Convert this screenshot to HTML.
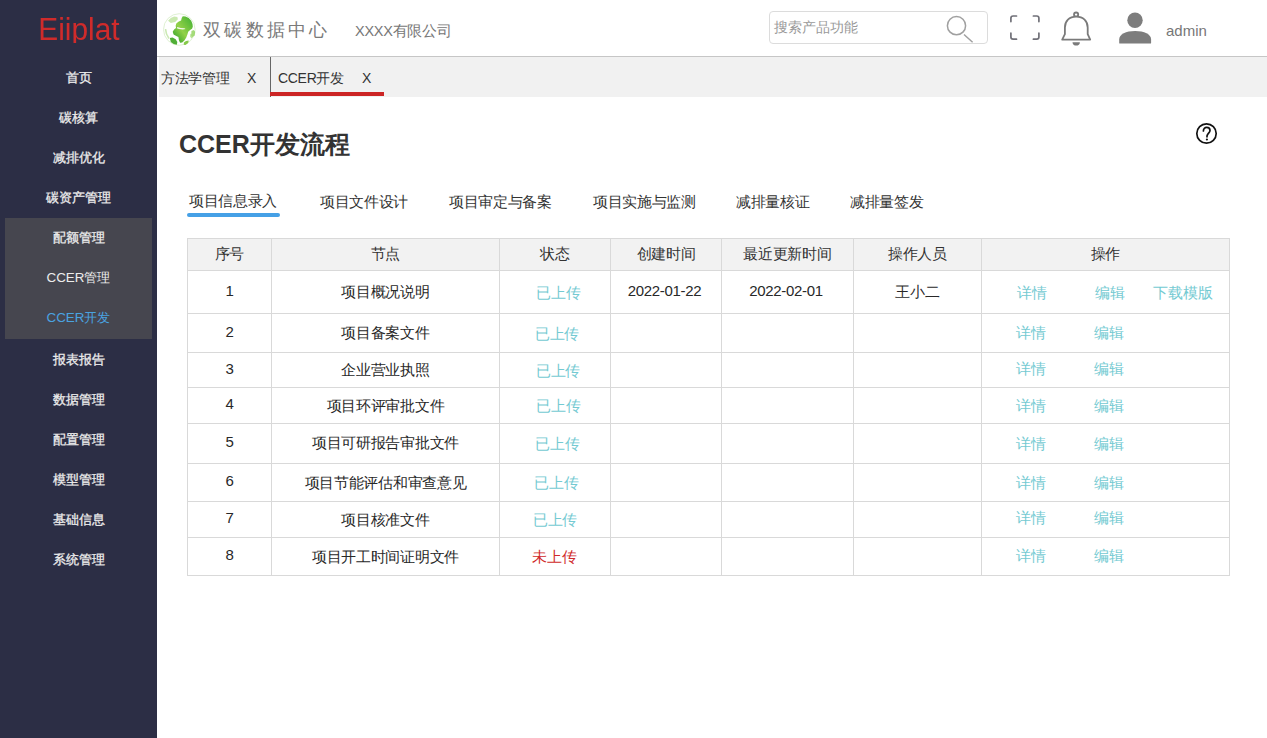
<!DOCTYPE html>
<html><head><meta charset="utf-8">
<style>
*{margin:0;padding:0;box-sizing:border-box;}
html,body{width:1267px;height:738px;overflow:hidden;background:#fff;font-family:"Liberation Sans",sans-serif;color:#333;}
.a{position:absolute;white-space:nowrap;}
#side{position:absolute;left:0;top:0;width:157px;height:738px;background:#2c2e45;}
#logo{position:absolute;left:0;width:157px;top:10px;height:32.5px;overflow:hidden;text-align:center;font-size:30.8px;color:#d02b2b;line-height:40px;}
#logo span{display:inline-block;transform:scaleX(0.97);transform-origin:50% 50%;}
.mi{position:absolute;left:0;width:157px;text-align:center;font-size:13.4px;color:#ececec;line-height:20px;font-weight:normal;-webkit-text-stroke:0.3px #ececec;}
#sub{position:absolute;left:5px;top:218px;width:147px;height:121px;background:#46464f;}
#hdr{position:absolute;left:157px;top:0;width:1110px;height:57px;background:#fff;border-bottom:1px solid #c6c6c6;}
#tabbar{position:absolute;left:159px;top:57px;width:1108px;height:40px;background:#f1f1f1;}
.tb{position:absolute;font-size:14px;color:#333;line-height:20px;letter-spacing:-0.3px;}
.tab{position:absolute;left:0;font-size:15px;letter-spacing:-0.35px;color:#333;line-height:20px;}
table{position:absolute;left:187px;top:238px;border-collapse:collapse;font-size:15px;color:#282828;}
td,th{border:1px solid #d9d9d9;text-align:center;font-weight:normal;padding:0;letter-spacing:-0.3px;}
th{background:#f2f2f2;color:#333;font-size:15px;}
.up{color:#74cad2;font-size:14.6px;padding-top:2px;}
.dg{position:relative;top:-2px;}
.no{color:#d02a2a;font-size:14.6px;padding-top:2px;}
.lk{color:#74cad2;}
</style></head><body>
<div id="side">
  <div id="logo"><span>Eiiplat</span></div>
  <div class="mi" style="top:68px">首页</div>
  <div class="mi" style="top:108px">碳核算</div>
  <div class="mi" style="top:148px">减排优化</div>
  <div class="mi" style="top:188px">碳资产管理</div>
  <div id="sub"></div>
  <div class="mi" style="top:228px">配额管理</div>
  <div class="mi" style="top:268px;-webkit-text-stroke:0">CCER管理</div>
  <div class="mi" style="top:308px;color:#4aa3e0;-webkit-text-stroke:0">CCER开发</div>
  <div class="mi" style="top:350px">报表报告</div>
  <div class="mi" style="top:390px">数据管理</div>
  <div class="mi" style="top:430px">配置管理</div>
  <div class="mi" style="top:470px">模型管理</div>
  <div class="mi" style="top:510px">基础信息</div>
  <div class="mi" style="top:550px">系统管理</div>
</div>

<div id="hdr"></div>
<!-- globe -->
<svg class="a" style="left:160px;top:10px" width="40" height="40" viewBox="0 0 40 40">
  <defs>
    <linearGradient id="g1" x1="0.1" y1="0.9" x2="0.9" y2="0.1"><stop offset="0" stop-color="#3aa52c"/><stop offset="0.45" stop-color="#93d148"/><stop offset="1" stop-color="#4cb535"/></linearGradient>
    <filter id="bl" x="-10%" y="-10%" width="120%" height="120%"><feGaussianBlur stdDeviation="0.45"/></filter>
  </defs>
  <circle cx="19.3" cy="19.5" r="15.8" fill="none" stroke="#dff1d2" stroke-width="1"/>
  <g filter="url(#bl)">
  <polygon points="22.8,6.2 25.5,6.5 28.7,8.1 31.2,10.8 32.5,14.1 32.8,16.8 32.0,18.7 30.1,20.1 28.2,21.7 27.4,24.4 26.3,27.6 24.4,30.4 22.2,32.5 20.1,32.8 19.0,30.4 18.4,27.1 16.3,26.0 13.6,24.4 12.7,21.7 14.1,19.5 16.0,17.9 15.7,15.7 16.3,13.6 18.4,11.7 21.1,10.6 21.7,8.1" fill="url(#g1)"/>
  <polygon points="17.3,17.1 20.6,17.9 24.4,18.2 25.5,19.0 22.8,19.5 19.0,19.0 16.8,18.2" fill="#f4faee"/>
  <polygon points="9.8,27.9 12.5,27.6 15.7,29.3 17.3,32.0 16.8,34.7 13.6,34.1 10.8,32.0" fill="#4fae35"/>
  <polygon points="23.8,32.5 26.0,30.9 28.7,30.6 28.2,33.1 25.5,35.0 23.8,34.7" fill="#86c94a"/>
  <polygon points="31.4,21.1 33.6,20.1 35.2,21.7 34.7,25.5 32.5,27.1 31.2,25.5" fill="#8fd35a" opacity="0.8"/>
  <polygon points="30.4,23.8 32.5,24.4 33.1,27.1 31.2,28.2 30.1,26.6" fill="#a5dc78" opacity="0.8"/>
  <polygon points="8.1,10.8 10.8,8.1 14.1,6.5 17.3,7.0 17.9,9.2 15.2,11.9 10.8,13.0" fill="#b4e08e" opacity="0.7"/>
  <path d="M5.5 19 C5.8 23,7 26,9 28.5" stroke="#b5e094" stroke-width="1.6" fill="none" opacity="0.7"/>
  </g>
</svg>
<div class="a" style="left:203px;top:17px;font-size:18px;line-height:26px;color:#7a7a7a;letter-spacing:3.3px;font-weight:normal;">双碳数据中心</div>
<div class="a" style="left:355px;top:21px;font-size:14.5px;line-height:20px;color:#777;letter-spacing:-0.25px;">XXXX有限公司</div>

<!-- search -->
<div class="a" style="left:769px;top:11px;width:219px;height:33px;border:1px solid #dcdcdc;border-radius:4px;"></div>
<div class="a" style="left:774px;top:18px;font-size:13.6px;line-height:20px;color:#9a9a9a;">搜索产品功能</div>
<svg class="a" style="left:940px;top:10px" width="40" height="40" viewBox="0 0 40 40">
  <circle cx="16.5" cy="15.7" r="9.1" fill="none" stroke="#a0a0a0" stroke-width="1.5"/>
  <line x1="24" y1="24.5" x2="32.6" y2="32.2" stroke="#a0a0a0" stroke-width="1.5"/>
</svg>
<!-- fullscreen -->
<svg class="a" style="left:1005px;top:11px" width="40" height="34" viewBox="0 0 40 34">
  <path d="M5.9 10.6 V7.2 Q5.9 5,8.1 5 H11.5 M28.4 5 H31.7 Q33.9 5,33.9 7.2 V10.6 M33.9 22.2 V26 Q33.9 28.2,31.7 28.2 H28.4 M11.5 28.2 H8.1 Q5.9 28.2,5.9 26 V22.2" fill="none" stroke="#707078" stroke-width="1.7" stroke-linecap="round"/>
</svg>
<!-- bell -->
<svg class="a" style="left:1058px;top:10px" width="36" height="38" viewBox="0 0 36 38">
  <circle cx="18.1" cy="4.6" r="2.1" fill="none" stroke="#7a7a7a" stroke-width="1.8"/>
  <path d="M18.2 6.6 C11.2 6.6,6.9 11,6.9 17.5 V24.2 L4.2 29.6 H32.2 L29.7 24.2 V17.5 C29.7 11,25.2 6.6,18.2 6.6 Z" fill="#fff" stroke="#7a7a7a" stroke-width="1.8" stroke-linejoin="round"/>
  <path d="M14.5 32.2 H21.9 C21.9 34.3,20.3 35.6,18.2 35.6 C16.1 35.6,14.5 34.3,14.5 32.2 Z" fill="#7a7a7a"/>
</svg>
<!-- user -->
<svg class="a" style="left:1115px;top:10px" width="40" height="36" viewBox="0 0 40 36">
  <circle cx="20" cy="10.3" r="7.7" fill="#7d7d7d"/>
  <path d="M4.2 33 V29.5 C4.2 24.5,11 21.1,20.1 21.1 C29.2 21.1,36.1 24.5,36.1 29.5 V33 Q36.1 33.6,35.4 33.6 H4.9 Q4.2 33.6,4.2 33 Z" fill="#7d7d7d"/>
</svg>
<div class="a" style="left:1166px;top:21px;font-size:15px;line-height:20px;color:#777;">admin</div>

<!-- tab bar -->
<div id="tabbar"></div>
<div class="tb a" style="left:161px;top:68px;">方法学管理</div>
<div class="tb a" style="left:247px;top:68px;">X</div>
<div class="a" style="left:270px;top:57px;width:1px;height:40px;background:#666;"></div>
<div class="tb a" style="left:278px;top:68px;">CCER开发</div>
<div class="tb a" style="left:362px;top:68px;">X</div>
<div class="a" style="left:270px;top:92px;width:114px;height:4px;background:#cc2525;"></div>

<!-- title -->
<div class="a" style="left:179px;top:128px;font-size:25px;line-height:32px;font-weight:bold;color:#333;">CCER开发流程</div>
<svg class="a" style="left:1194px;top:121px" width="26" height="26" viewBox="0 0 26 26">
  <circle cx="12.5" cy="12.5" r="9.7" fill="none" stroke="#111" stroke-width="1.7"/>
  <path d="M9.4 9.9 C9.4 7.6,10.9 6.4,12.6 6.4 C14.5 6.4,16 7.7,16 9.5 C16 11.8,13.4 12.4,13 15 V15.8" fill="none" stroke="#111" stroke-width="1.7" stroke-linecap="round"/>
  <circle cx="12.9" cy="18.5" r="1.1" fill="#111"/>
</svg>

<!-- tabs -->
<div class="a tab" style="left:189px;top:191px;">项目信息录入</div>
<div class="a" style="left:187px;top:213px;width:93px;height:4px;background:#45a0e6;border-radius:2px;"></div>
<div class="a tab" style="left:320px;top:192px;">项目文件设计</div>
<div class="a tab" style="left:449px;top:192px;">项目审定与备案</div>
<div class="a tab" style="left:593px;top:192px;">项目实施与监测</div>
<div class="a tab" style="left:736px;top:192px;">减排量核证</div>
<div class="a tab" style="left:850px;top:192px;">减排量签发</div>

<!-- table -->
<table>
<colgroup><col style="width:84px"><col style="width:228px"><col style="width:111px"><col style="width:111px"><col style="width:132px"><col style="width:128px"><col style="width:248px"></colgroup>
<tr style="height:32px"><th>序号</th><th>节点</th><th>状态</th><th>创建时间</th><th>最近更新时间</th><th>操作人员</th><th>操作</th></tr>
<tr style="height:43px"><td><span class="dg">1</span></td><td>项目概况说明</td><td class="up" style="padding-left:6.4px">已上传</td><td style="padding-right:3px"><span class="dg">2022-01-22</span></td><td style="padding-right:3px"><span class="dg">2022-02-01</span></td><td>王小二</td><td></td></tr>
<tr style="height:39px"><td><span class="dg">2</span></td><td>项目备案文件</td><td class="up" style="padding-left:4.0px">已上传</td><td></td><td></td><td></td><td></td></tr>
<tr style="height:35px"><td><span class="dg">3</span></td><td>企业营业执照</td><td class="up" style="padding-left:6.0px">已上传</td><td></td><td></td><td></td><td></td></tr>
<tr style="height:36px"><td><span class="dg">4</span></td><td style="padding-top:2px">项目环评审批文件</td><td class="up" style="padding-left:6.8px">已上传</td><td></td><td></td><td></td><td></td></tr>
<tr style="height:40px"><td><span class="dg">5</span></td><td>项目可研报告审批文件</td><td class="up" style="padding-left:4.8px">已上传</td><td></td><td></td><td></td><td></td></tr>
<tr style="height:38px"><td><span class="dg">6</span></td><td style="padding-top:2px">项目节能评估和审查意见</td><td class="up" style="padding-left:2.4px">已上传</td><td></td><td></td><td></td><td></td></tr>
<tr style="height:36px"><td><span class="dg">7</span></td><td style="padding-top:2px">项目核准文件</td><td class="up" style="padding-left:0.0px">已上传</td><td></td><td></td><td></td><td></td></tr>
<tr style="height:38px"><td><span class="dg">8</span></td><td style="padding-top:2px">项目开工时间证明文件</td><td class="no" style="padding-right:1.6px">未上传</td><td></td><td></td><td></td><td></td></tr>
</table>

<!-- actions -->
<div class="a lk" style="left:1017px;top:283px;font-size:15px;line-height:20px;">详情</div>
<div class="a lk" style="left:1095px;top:283px;font-size:15px;line-height:20px;">编辑</div>
<div class="a lk" style="left:1153px;top:283px;font-size:15px;line-height:20px;">下载模版</div>
<div class="a lk" style="left:1016px;top:323px;font-size:15px;line-height:20px;">详情</div>
<div class="a lk" style="left:1094px;top:323px;font-size:15px;line-height:20px;">编辑</div>
<div class="a lk" style="left:1016px;top:359px;font-size:15px;line-height:20px;">详情</div>
<div class="a lk" style="left:1094px;top:359px;font-size:15px;line-height:20px;">编辑</div>
<div class="a lk" style="left:1016px;top:396px;font-size:15px;line-height:20px;">详情</div>
<div class="a lk" style="left:1094px;top:396px;font-size:15px;line-height:20px;">编辑</div>
<div class="a lk" style="left:1016px;top:434px;font-size:15px;line-height:20px;">详情</div>
<div class="a lk" style="left:1094px;top:434px;font-size:15px;line-height:20px;">编辑</div>
<div class="a lk" style="left:1016px;top:473px;font-size:15px;line-height:20px;">详情</div>
<div class="a lk" style="left:1094px;top:473px;font-size:15px;line-height:20px;">编辑</div>
<div class="a lk" style="left:1016px;top:508px;font-size:15px;line-height:20px;">详情</div>
<div class="a lk" style="left:1094px;top:508px;font-size:15px;line-height:20px;">编辑</div>
<div class="a lk" style="left:1016px;top:546px;font-size:15px;line-height:20px;">详情</div>
<div class="a lk" style="left:1094px;top:546px;font-size:15px;line-height:20px;">编辑</div>
</body></html>
